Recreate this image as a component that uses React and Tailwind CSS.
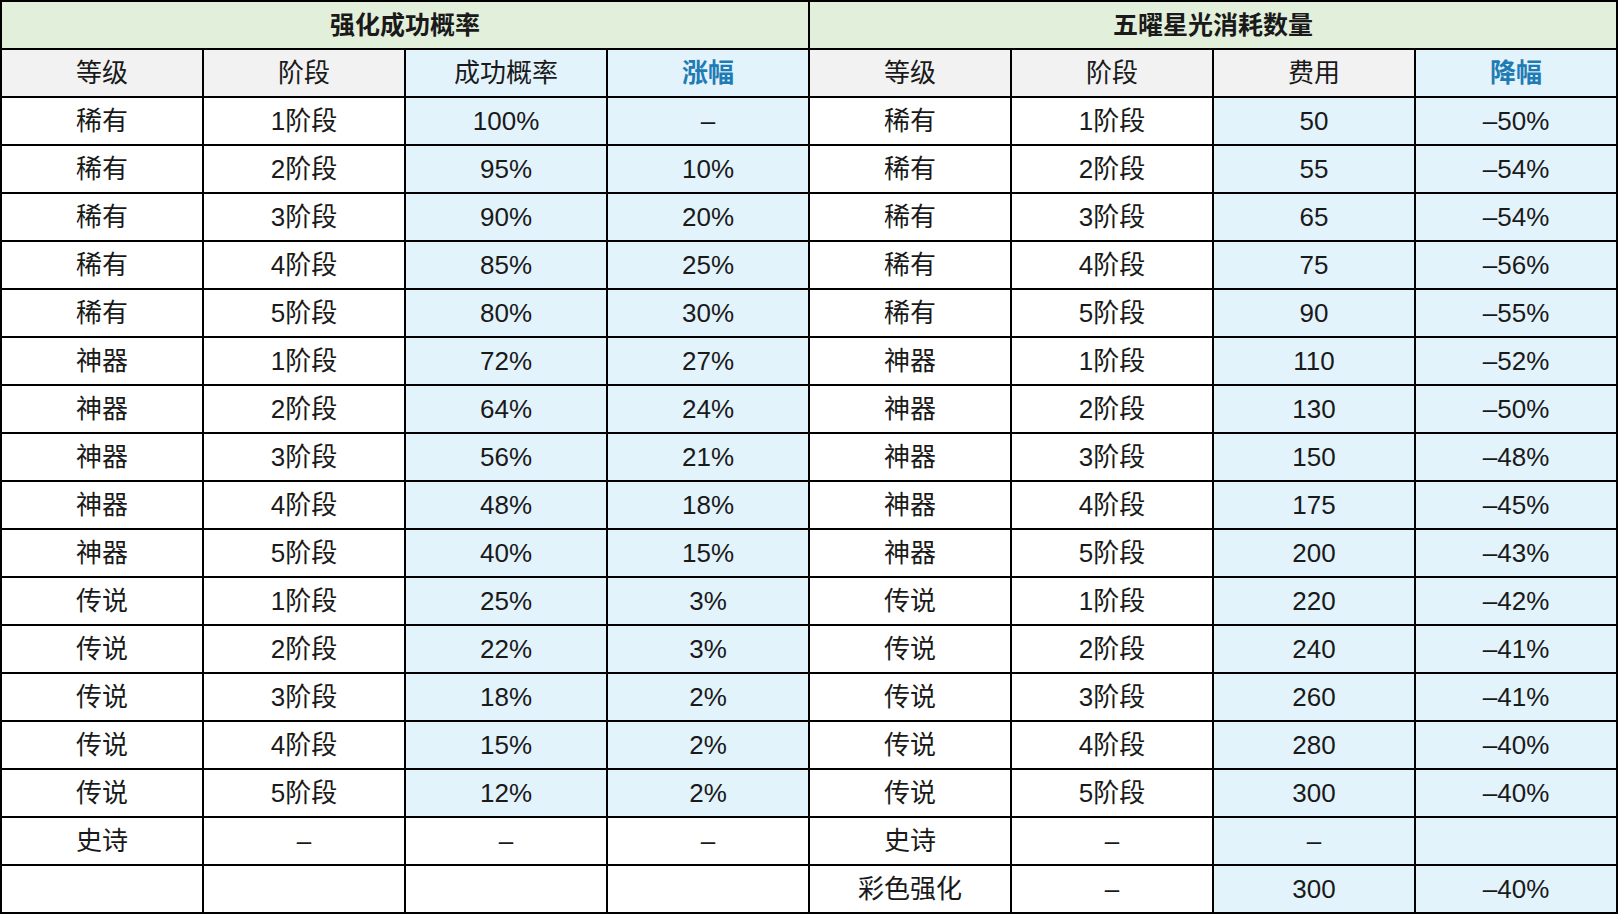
const left = [
  ["稀有", "1阶段", "100%", "–"],
  ["稀有", "2阶段", "95%", "10%"],
  ["稀有", "3阶段", "90%", "20%"],
  ["稀有", "4阶段", "85%", "25%"],
  ["稀有", "5阶段", "80%", "30%"],
  ["神器", "1阶段", "72%", "27%"],
  ["神器", "2阶段", "64%", "24%"],
  ["神器", "3阶段", "56%", "21%"],
  ["神器", "4阶段", "48%", "18%"],
  ["神器", "5阶段", "40%", "15%"],
  ["传说", "1阶段", "25%", "3%"],
  ["传说", "2阶段", "22%", "3%"],
  ["传说", "3阶段", "18%", "2%"],
  ["传说", "4阶段", "15%", "2%"],
  ["传说", "5阶段", "12%", "2%"],
  ["史诗", "–", "–", "–"],
  ["", "", "", ""],
];

const right = [
  ["稀有", "1阶段", "50", "–50%"],
  ["稀有", "2阶段", "55", "–54%"],
  ["稀有", "3阶段", "65", "–54%"],
  ["稀有", "4阶段", "75", "–56%"],
  ["稀有", "5阶段", "90", "–55%"],
  ["神器", "1阶段", "110", "–52%"],
  ["神器", "2阶段", "130", "–50%"],
  ["神器", "3阶段", "150", "–48%"],
  ["神器", "4阶段", "175", "–45%"],
  ["神器", "5阶段", "200", "–43%"],
  ["传说", "1阶段", "220", "–42%"],
  ["传说", "2阶段", "240", "–41%"],
  ["传说", "3阶段", "260", "–41%"],
  ["传说", "4阶段", "280", "–40%"],
  ["传说", "5阶段", "300", "–40%"],
  ["史诗", "–", "–", ""],
  ["彩色强化", "–", "300", "–40%"],
];

const cell = "border-2 border-black text-center align-middle p-0";

export default function App() {
  return (
    <div
      className="w-full h-[914px] bg-white text-[#1a1a1a]"
      style={{ fontFamily: '"Liberation Sans", "Noto Sans CJK SC", sans-serif' }}
    >
      <table className="w-full h-full table-fixed border-collapse text-[26px] leading-none">
        <tbody>
          <tr className="h-[48px] bg-[#e2efda] font-bold text-[25px] text-[#1a1a1a]">
            <td colSpan={4} className={cell}>强化成功概率</td>
            <td colSpan={4} className={cell}>五曜星光消耗数量</td>
          </tr>
          <tr>
            <td className={`${cell} bg-[#f2f2f2]`}>等级</td>
            <td className={`${cell} bg-[#f2f2f2]`}>阶段</td>
            <td className={`${cell} bg-[#e3f3fc]`}>成功概率</td>
            <td className={`${cell} bg-[#e3f3fc] text-[#1f7bb4] font-bold`}>涨幅</td>
            <td className={`${cell} bg-[#f2f2f2]`}>等级</td>
            <td className={`${cell} bg-[#f2f2f2]`}>阶段</td>
            <td className={`${cell} bg-[#f2f2f2]`}>费用</td>
            <td className={`${cell} bg-[#e3f3fc] text-[#1f7bb4] font-bold`}>降幅</td>
          </tr>
          {left.map((l, i) => {
            const r = right[i];
            const lBlue = i < 15 ? "bg-[#e3f3fc]" : "bg-white";
            return (
              <tr key={i}>
                <td className={cell}>{l[0]}</td>
                <td className={cell}>{l[1]}</td>
                <td className={`${cell} ${lBlue}`}>{l[2]}</td>
                <td className={`${cell} ${lBlue}`}>{l[3]}</td>
                <td className={cell}>{r[0]}</td>
                <td className={cell}>{r[1]}</td>
                <td className={`${cell} bg-[#e3f3fc]`}>{r[2]}</td>
                <td className={`${cell} bg-[#e3f3fc]`}>{r[3]}</td>
              </tr>
            );
          })}
        </tbody>
      </table>
    </div>
  );
}
